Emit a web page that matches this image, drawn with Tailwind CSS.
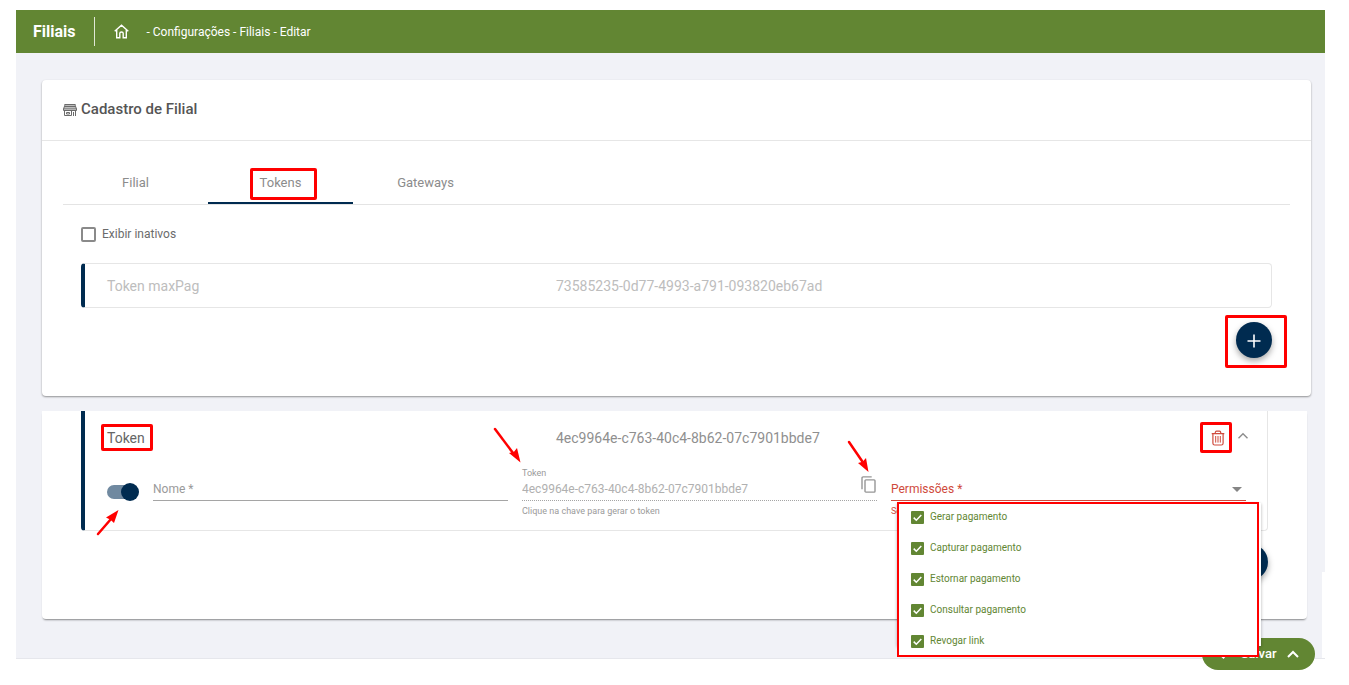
<!doctype html>
<html lang="pt-BR">
  <head>
    <meta charset="UTF-8" />
    <meta name="viewport" content="width=device-width, initial-scale=1.0" />
    <title>Filiais - Editar</title>
    <script src="https://cdn.jsdelivr.net/npm/@tailwindcss/browser@4"></script>
  </head>
  <body class="bg-white pt-[10px] pl-4 pr-6 font-[Roboto,sans-serif] text-xs text-[#6b6b6b]">
    <header class="flex h-[43px] items-center bg-[#628633] pl-[17px] text-white">
      <h1 class="text-base font-bold">Filiais</h1>
      <span class="ml-[18px] h-[29px] w-px bg-white/80"></span>
      <nav class="flex items-center" aria-label="Caminho">
        <a href="#" class="ml-[19px]" aria-label="Início">
          <svg class="size-[15px]" viewBox="0 0 15 15" fill="none" stroke="currentColor" stroke-width="1.4">
            <path d="M.7 7.3 7.5 1.2l6.8 6.1M2.7 6v7.8h3.1V9.2c0-.7.6-1.2 1.7-1.2s1.7.5 1.7 1.2v4.6h3.1V6" />
          </svg>
        </a>
        <span class="ml-[18px]">- Configurações - Filiais - Editar</span>
      </nav>
    </header>

    <main class="relative bg-[#f1f2f7] pt-[27px] pr-[14px] pb-[39px] pl-[26px]">
      <!-- Cadastro -->
      <section class="rounded-[4px] bg-white pb-[38px] shadow-[0_1px_2px_rgba(0,0,0,0.4)]">
        <div class="flex h-[61px] items-center border-b border-[#e6e6e6] px-[21px]">
          <svg class="mr-1 size-[14px]" viewBox="0 0 14 14" fill="none" stroke="#6b6b6b">
            <path d="M1.700 1.500h10.600v1.200l1.200 3.300H.5l1.200-3.300z" fill="#bdbdbd" />
            <path d="M1.500 3.500h11M.5 6v1.500h13V6M1.500 7.500v5h7v-5M12.500 7.500v5.500M10.500 13V9M3.500 9.500h3v1.500h-3z" />
          </svg>
          <h2 class="text-[15px] font-medium text-[#555]">Cadastro de Filial</h2>
        </div>

        <div class="px-[21px] pt-5">
          <div class="flex h-[44px] border-b border-[#e4e4e4] text-[13px] text-[#8c8c8c]" role="tablist">
            <button class="w-[145px]" role="tab">Filial</button>
            <button class="relative w-[145px] border-b-2 border-[#002b50] pt-[2px]" role="tab" aria-selected="true">
              Tokens
              <span class="absolute top-[7px] left-[42px] h-[32px] w-[67px] rounded-xs border-3 border-[#f00]"></span>
            </button>
            <button class="w-[145px]" role="tab">Gateways</button>
          </div>
        </div>

        <div class="px-[39px]">
          <label class="mt-[21px] flex h-4 items-center gap-[6px]">
            <input type="checkbox" class="size-[15px] appearance-none rounded-xs border-2 border-[#8a8a8a]" />
            Exibir inativos
          </label>
          <div class="mt-[21px] grid h-[45px] grid-cols-[449px_1fr] items-center rounded-[4px] border border-l-4 border-[#e6e6e6] border-l-[#002b50] pl-[22px] text-sm text-[#bdbdbd]">
            <span>Token maxPag</span>
            <span>73585235-0d77-4993-a791-093820eb67ad</span>
          </div>
          <div class="mt-[14px] flex justify-end">
            <div class="relative">
              <button class="flex size-[36px] items-center justify-center rounded-full bg-[#002b50] text-white shadow-[0_3px_6px_rgba(0,0,0,0.35)]" aria-label="Adicionar token">
                <svg class="mt-[2px] size-[14px]" viewBox="0 0 14 14" stroke="currentColor" stroke-width="1.6">
                  <path d="M7 .5v13M.5 7h13" />
                </svg>
              </button>
              <span class="absolute -top-[7px] -left-[11px] h-[53px] w-[62px] rounded-xs border-3 border-[#f00]"></span>
            </div>
          </div>
        </div>
      </section>

      <!-- Token em edição -->
      <section class="mt-[15px] mr-1 rounded-b-[4px] bg-white px-[39px] pb-[39px] shadow-[0_2px_2px_-1px_rgba(0,0,0,0.45)]">
        <div class="rounded-b-[4px] border border-t-0 border-l-4 border-[#e6e6e6] border-l-[#002b50] pb-[11px] pl-[22px]">
          <div class="grid h-[54px] grid-cols-[449px_1fr_auto] items-center pr-[19px] text-sm">
            <div>
              <span class="relative text-[#666]">
                Token
                <span class="absolute -top-[6px] -left-[6px] h-[27px] w-[52px] rounded-xs border-3 border-[#f00]"></span>
              </span>
            </div>
            <span class="text-[#8f8f8f]">4ec9964e-c763-40c4-8b62-07c7901bbde7</span>
            <div class="flex items-center">
              <button class="relative mr-[13px] text-[#cf4a3c]" aria-label="Excluir">
                <svg class="h-4 w-[14px]" viewBox="0 0 14 16" fill="none" stroke="currentColor" stroke-width="1.2">
                  <path d="M.7 3.6h12.6M4.2 3.4c0-1.5.5-2.3 1.3-2.3h3c.8 0 1.3.8 1.3 2.3" />
                  <path d="M1.9 3.8v9.4c0 1.1.7 1.8 1.8 1.8h6.6c1.1 0 1.8-.7 1.8-1.8V3.8" />
                  <path d="M4.7 6v6.6M7 6v6.6M9.3 6v6.6" stroke-width="1" />
                </svg>
                <span class="absolute -top-[8px] -left-[11px] h-[31px] w-[32px] rounded-xs border-3 border-[#f00]"></span>
              </button>
              <button class="mb-1 text-[#8c8c8c]" aria-label="Recolher">
                <svg class="h-2 w-[10px]" viewBox="0 0 10 8" fill="none" stroke="currentColor" stroke-width="1.4">
                  <path d="m.5 6.3 4.5-4.5 4.5 4.5" />
                </svg>
              </button>
            </div>
          </div>

          <div class="flex gap-[14px] pr-[21px]">
            <label class="relative mt-[18px] flex h-[18px] w-8 shrink-0 items-center">
              <input type="checkbox" role="switch" class="peer sr-only" aria-label="Token ativo" checked />
              <span class="h-[14px] w-7 rounded-full bg-[#7089a0]"></span>
              <span class="absolute right-0 size-[18px] rounded-full bg-[#002b50]"></span>
              <svg class="absolute top-[24px] -left-[12px] h-[30px] w-[26px]" viewBox="0 0 26 30" fill="#f00">
                <path d="m3 27 13-15" stroke="#f00" stroke-width="2.5" stroke-linecap="round" />
                <path d="M23.500 3 19 16l-3.500-3.200L11 10.500z" />
              </svg>
            </label>

            <div class="min-w-0 flex-1 pt-4">
              <input type="text" aria-label="Nome" placeholder="Nome *" class="block h-5 w-full border-b border-[#a5a5a5] pb-1 text-xs outline-none placeholder:text-[#9a9a9a]" />
            </div>

            <div class="relative min-w-0 flex-1 text-[#9a9a9a]">
              <label for="token" class="block h-4 text-[9px] leading-4">Token</label>
              <input id="token" type="text" value="4ec9964e-c763-40c4-8b62-07c7901bbde7" readonly class="block h-5 w-full border-b border-dotted border-[#a5a5a5] pb-1 text-xs text-[#b0b0b0] outline-none" />
              <p class="mt-[2px] text-[9px] leading-4">Clique na chave para gerar o token</p>
              <button class="absolute top-[11px] right-[1px]" aria-label="Copiar">
                <svg class="h-[17px] w-[15px]" viewBox="0 0 15 17" fill="none" stroke="#969696" stroke-width="1.4">
                  <path d="M1 13.200V2c0-.7.4-1.100 1.100-1.100h8.600" />
                  <rect x="4" y="3.900" width="10" height="12.200" rx=".9" />
                </svg>
              </button>
              <svg class="absolute -top-[40px] -left-[30px] h-[42px] w-[32px]" viewBox="0 0 32 42" fill="#f00">
                <path d="m3 4 18 24" stroke="#f00" stroke-width="2.5" stroke-linecap="round" />
                <path d="M28.500 37.500 17 28l5-1.200 3-3.800z" />
              </svg>
              <svg class="absolute -top-[26px] right-[5px] h-[36px] w-[26px]" viewBox="0 0 26 36" fill="#f00">
                <path d="m3 3 13 19" stroke="#f00" stroke-width="2.5" stroke-linecap="round" />
                <path d="M22.500 33 12 24l4.500-1.200L20 19z" />
              </svg>
            </div>

            <div class="relative min-w-0 flex-1 pt-4 text-[#cf4a3c]">
              <select aria-label="Permissões" class="block h-5 w-full appearance-none border-b border-[#cf4a3c] pb-1 text-xs outline-none">
                <option>Permissões *</option>
              </select>
              <span class="pointer-events-none absolute top-[22px] right-1 border-x-5 border-t-5 border-x-transparent border-t-[#858585]"></span>
              <p class="mt-[2px] text-[9px] leading-4">Selecione</p>

              <!-- Opções de permissão -->
              <div class="absolute top-[38px] right-[-15px] left-[6px] z-20 h-[143px] bg-white shadow-[0_1px_3px_rgba(0,0,0,0.3)]"></div>
              <fieldset class="absolute top-[37px] right-[-13px] left-[6px] z-20 flex h-[155px] flex-col gap-[15px] border-2 border-[#f00] bg-white pt-[5px] pl-3 text-[10px] leading-4 text-[#628633]">
                <label class="flex items-center gap-[6px]">
                  <span class="relative size-[13px]">
                    <input type="checkbox" checked class="block size-[13px] appearance-none rounded-[1px] bg-[#628633]" />
                    <svg class="absolute inset-0" viewBox="0 0 13 13" fill="none" stroke="#fff" stroke-width="1.5"><path d="m2.700 6.600 2.600 2.600 5-5.200" /></svg>
                  </span>
                  Gerar pagamento
                </label>
                <label class="flex items-center gap-[6px]">
                  <span class="relative size-[13px]">
                    <input type="checkbox" checked class="block size-[13px] appearance-none rounded-[1px] bg-[#628633]" />
                    <svg class="absolute inset-0" viewBox="0 0 13 13" fill="none" stroke="#fff" stroke-width="1.5"><path d="m2.700 6.600 2.600 2.600 5-5.200" /></svg>
                  </span>
                  Capturar pagamento
                </label>
                <label class="flex items-center gap-[6px]">
                  <span class="relative size-[13px]">
                    <input type="checkbox" checked class="block size-[13px] appearance-none rounded-[1px] bg-[#628633]" />
                    <svg class="absolute inset-0" viewBox="0 0 13 13" fill="none" stroke="#fff" stroke-width="1.5"><path d="m2.700 6.600 2.600 2.600 5-5.200" /></svg>
                  </span>
                  Estornar pagamento
                </label>
                <label class="flex items-center gap-[6px]">
                  <span class="relative size-[13px]">
                    <input type="checkbox" checked class="block size-[13px] appearance-none rounded-[1px] bg-[#628633]" />
                    <svg class="absolute inset-0" viewBox="0 0 13 13" fill="none" stroke="#fff" stroke-width="1.5"><path d="m2.700 6.600 2.600 2.600 5-5.200" /></svg>
                  </span>
                  Consultar pagamento
                </label>
                <label class="flex items-center gap-[6px]">
                  <span class="relative size-[13px]">
                    <input type="checkbox" checked class="block size-[13px] appearance-none rounded-[1px] bg-[#628633]" />
                    <svg class="absolute inset-0" viewBox="0 0 13 13" fill="none" stroke="#fff" stroke-width="1.5"><path d="m2.700 6.600 2.600 2.600 5-5.200" /></svg>
                  </span>
                  Revogar link
                </label>
              </fieldset>
            </div>
          </div>
        </div>
        <div class="mt-[13px] flex justify-end">
          <button class="size-[36px] rounded-full bg-[#002b50] shadow-[0_3px_6px_rgba(0,0,0,0.35)]" aria-label="Adicionar token"></button>
        </div>
      </section>
      <span class="absolute right-0 bottom-0 h-[86px] w-[3px] bg-white"></span>
    </main>

    <footer class="relative z-10 flex justify-end border-t border-[#e6e7ec] pr-[10px]">
      <button class="-mt-[21px] flex h-8 w-[113px] items-center justify-center gap-[10px] rounded-full bg-[#628633] text-[13px] font-medium text-white">
        <svg class="h-[10px] w-3" viewBox="0 0 12 10" fill="none" stroke="currentColor" stroke-width="2"><path d="m1 4.500 4.500 4L11 1.500" /></svg>
        Salvar
        <svg class="h-2 w-3" viewBox="0 0 12 8" fill="none" stroke="currentColor" stroke-width="2"><path d="m1 7 5-5 5 5" /></svg>
      </button>
    </footer>
  </body>
</html>
